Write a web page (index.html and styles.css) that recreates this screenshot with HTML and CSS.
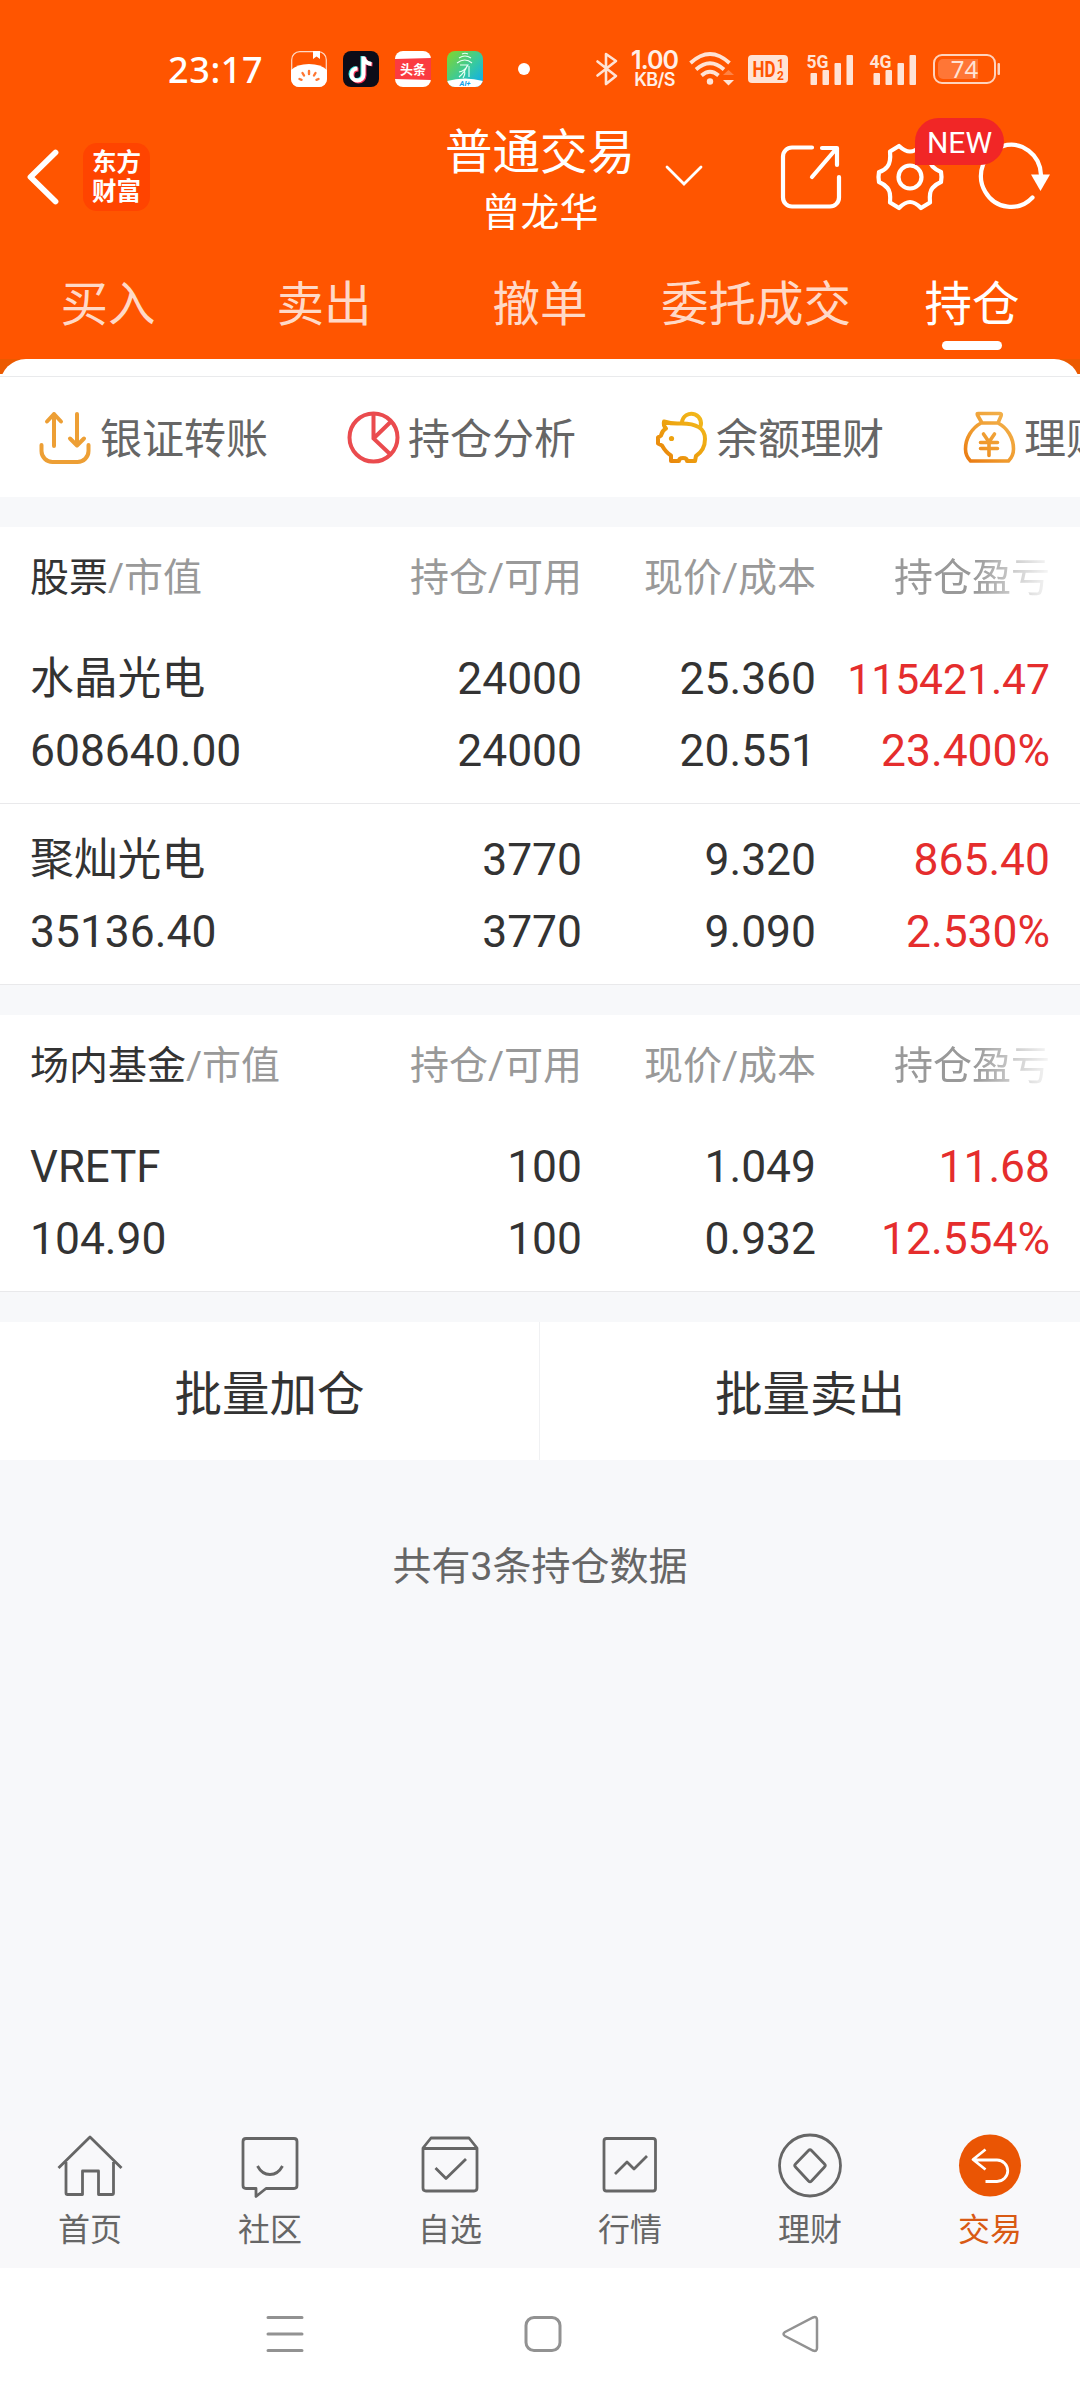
FILE: index.html
```html
<!DOCTYPE html>
<html lang="zh-CN">
<head>
<meta charset="utf-8">
<title>普通交易</title>
<link rel="stylesheet" href="styles.css">
</head>
<body>
<header class="top">
  <div class="status">
    <span class="clock">23:17</span>
    <div class="apps">
      <svg width="36" height="36" viewBox="0 0 36 36"><rect x=".7" y=".7" width="34.6" height="34.6" rx="8" fill="none" stroke="#ffd9c5" stroke-width="1.2"/><path d="M0 19Q6 13 18 13T36 19V28a8 8 0 0 1-8 8H8a8 8 0 0 1-8-8Z" fill="#fff"/><path d="M22 0h7v8l-3.500-2.500L22 8Z" fill="#fff"/><g stroke="#ff7733" stroke-width="2.400" stroke-linecap="round"><path d="M18 20v3M11.500 22l1.500 2.500M24.500 22L23 24.500M8.500 28l2 .8M27.500 28l-2 .8"/></g></svg>
      <svg width="36" height="36" viewBox="0 0 36 36"><rect width="36" height="36" rx="8" fill="#0d0c18"/><g fill="none" stroke-width="4"><path d="M19.500 5v18a6 6 0 1 1-6-6M19.500 6q1.500 6 8 6.500" stroke="#35e0e0"/><path d="M21.500 6v18.500a6 6 0 1 1-6-6M21.500 7q1.500 6 8 6.500" stroke="#fb3158"/><path d="M20.500 5.500v18a6 6 0 1 1-6-6M20.500 6.500q1.500 6 8 6.500" stroke="#fff"/></g></svg>
      <svg width="36" height="36" viewBox="0 0 36 36"><rect width="36" height="36" rx="8" fill="#fff"/><path d="M0 8l36-1v22l-36-1Z" fill="#fb3b41"/><text x="18" y="23" class="tt">头条</text></svg>
      <svg width="36" height="36" viewBox="0 0 36 36"><defs><linearGradient id="ai" x2="1" y2="1"><stop offset="0" stop-color="#84d629"/><stop offset=".55" stop-color="#36c9a0"/><stop offset="1" stop-color="#08a8fa"/></linearGradient><clipPath id="aic"><rect width="36" height="36" rx="8"/></clipPath></defs><g clip-path="url(#aic)"><rect width="36" height="36" fill="url(#ai)"/><path d="M0 30Q18 25 36 30V36H0Z" fill="#fff"/></g><g fill="none" stroke="#e8fff5" stroke-width="1.100"><path d="M15 3q3-1.500 6 0M12 7q6-4 12 0M10 12q8-6 15 0M13 14h8q-3 6-9 7M20 15q-2 6-8 11M17 19q2 3-1 8M22 15v11"/></g><text x="18" y="35" class="aitext">AI+</text></svg>
    </div>
    <i class="dot"></i>
    <svg class="bt" width="22" height="36" viewBox="0 0 22 36" fill="none" stroke="#ffe3d5" stroke-width="2.600" stroke-linejoin="round" stroke-linecap="round"><path d="M1.500 10.500L20 25 10 33V3l10 7L1.500 24.500"/></svg>
    <span class="speed"><b>1.00</b><b class="unit">KB/S</b></span>
    <svg class="wifi" width="46" height="36" viewBox="0 0 46 36"><g fill="none" stroke="#ffe3d5" stroke-width="3.800"><path d="M1.500 12Q21-6 40.500 12M7 18.500q14-12.500 28 0M12.500 24.500q8.500-7.500 17 0"/></g><circle cx="21" cy="30.500" r="3.200" fill="#ffe3d5"/><path d="M34 24h11l-5.500-5Z" fill="#ff8345"/><path d="M34 29h11l-5.500 5.500Z" fill="#ffe3d5"/></svg>
    <svg class="hd" width="40" height="28" viewBox="0 0 40 28"><rect width="40" height="28" rx="4" fill="#ffe3d5"/><text x="4.500" y="22" class="hdt" textLength="23" lengthAdjust="spacingAndGlyphs">HD</text><text x="29" y="13" class="hds">1</text><text x="29" y="25" class="hds">2</text></svg>
    <svg class="sig" width="47" height="34" viewBox="0 0 47 34" fill="#ffe3d5"><text x="-.5" y="15.500" class="gen" textLength="22" lengthAdjust="spacingAndGlyphs">5G</text><rect x="3.500" y="21" width="6.500" height="12" rx="1"/><rect x="15.500" y="18" width="6.500" height="15" rx="1"/><rect x="27.500" y="11" width="6.500" height="22" rx="1"/><rect x="39.500" y="3" width="6.500" height="30" rx="1"/></svg>
    <svg class="sig" width="47" height="34" viewBox="0 0 47 34" fill="#ffe3d5"><text x="-.5" y="15.500" class="gen" textLength="22" lengthAdjust="spacingAndGlyphs">4G</text><rect x="3.500" y="21" width="6.500" height="12" rx="1"/><rect x="15.500" y="18" width="6.500" height="15" rx="1"/><rect x="27.500" y="11" width="6.500" height="22" rx="1"/><rect x="39.500" y="3" width="6.500" height="30" rx="1"/></svg>
    <svg class="bat" width="68" height="30" viewBox="0 0 68 30"><rect x="1" y="1" width="61" height="28" rx="8" fill="none" stroke="#ffd3bd" stroke-width="2"/><path d="M10 5h35v20H10a5 5 0 0 1-5-5V10a5 5 0 0 1 5-5Z" fill="#ff7636"/><rect x="64.500" y="9" width="2.500" height="12" rx="1" fill="#ffd3bd"/><text x="31.500" y="24" class="batt">74</text></svg>
  </div>
  <div class="bar">
    <div class="brand">
      <svg width="32" height="56" viewBox="0 0 32 56" fill="none" stroke="#fff" stroke-width="5.800" stroke-linecap="round" stroke-linejoin="round"><path d="M28.500 3.500L3.500 28l25 24.500"/></svg>
      <div class="logo">东方<br>财富</div>
    </div>
    <div class="title"><div class="t1">普通交易</div><div class="t2">曾龙华</div></div>
    <svg class="down" width="38" height="22" viewBox="0 0 38 22" fill="none" stroke="#fff" stroke-width="2.800" stroke-linecap="round"><path d="M2 2l17 17L36 2"/></svg>
    <div class="actions">
      <svg width="62" height="66" viewBox="0 0 62 66" fill="none" stroke="#fff" stroke-width="4.200" stroke-linecap="round" stroke-linejoin="round"><path d="M32 3.500H12a9 9 0 0 0-9 9v41a9 9 0 0 0 9 9h38a9 9 0 0 0 9-9V33"/><path d="M42 4h15v17M56 5L32 33"/></svg>
      <svg width="68" height="68" viewBox="0 0 68 68" fill="none" stroke="#fff" stroke-width="4.200" stroke-linejoin="round"><path d="M23 3L14 8.500Q15 19 11.500 23.500T3 29Q2 34 3 39 8 41 11.500 45T14 59.500L23 65Q29 59 34 59T45 65L54 59.500Q53 49 56.500 45T65 39Q66 34 65 29 60 27 56.500 23.500T54 8.500L45 3Q39 8.500 34 8.500T23 3Z"/><circle cx="34" cy="34" r="11.500"/></svg>
      <svg width="74" height="68" viewBox="0 0 74 68"><path d="M54.500 54.500A30 31 0 1 1 63 32" fill="none" stroke="#fff" stroke-width="4.200" stroke-linecap="round"/><path d="M53 31.500h19L62.500 48Z" fill="#fff"/></svg>
      <span class="badge">NEW</span>
    </div>
  </div>
  <nav class="tabs"><span>买入</span><span>卖出</span><span>撤单</span><span>委托成交</span><span class="on">持仓</span></nav>
</header>
<div class="sheetwrap"><section class="sheet">
  <div class="tools">
    <div class="tool"><svg width="54" height="54" viewBox="0 0 54 54" fill="none" stroke="#ed9f35" stroke-width="4" stroke-linecap="round" stroke-linejoin="round"><path d="M3.500 34v6a11 11 0 0 0 11 11h25a11 11 0 0 0 11-11v-6M16 35V3M9 10.500L16 3l7 7.500M39 3v31M32 27.500l7 7 7-7"/></svg><span>银证转账</span></div>
    <div class="tool"><svg width="54" height="54" viewBox="0 0 54 54" fill="none" stroke="#ea4b4e" stroke-width="4"><circle cx="27.500" cy="26.500" r="24"/><path d="M27.500 3v24.500l17 16M27.500 27.500L44.500 11"/></svg><span>持仓分析</span></div>
    <div class="tool"><svg width="54" height="54" viewBox="0 0 54 54" fill="none" stroke="url(#pg)" stroke-width="4" stroke-linejoin="round"><defs><linearGradient id="pg" gradientUnits="userSpaceOnUse" x1="5" y1="50" x2="48" y2="5"><stop stop-color="#e9800c"/><stop offset=".5" stop-color="#eda20f"/><stop offset="1" stop-color="#f2b81c"/></linearGradient></defs><path d="M26 12.500Q18 13 10 10.500q-1 4 2 7-4 2-5 7l-3 2v6l4 2q4 7 9 10v5.500h8q0-3 4-3t4 3h8l1-5q9-6 9-17Q51 12 26 12.500Z"/><path d="M28 11.500A9.500 9.500 0 1 1 45 18"/><circle cx="17.500" cy="27.500" r="2.600" fill="#eda20f" stroke="none"/></svg><span>余额理财</span></div>
    <div class="tool"><svg width="54" height="54" viewBox="0 0 54 54" fill="none" stroke="url(#bg)" stroke-width="3.600" stroke-linejoin="round" stroke-linecap="round"><defs><linearGradient id="bg" gradientUnits="userSpaceOnUse" x1="5" y1="52" x2="45" y2="5"><stop stop-color="#e97810"/><stop offset=".4" stop-color="#ef982b"/><stop offset="1" stop-color="#f2b04a"/></linearGradient></defs><path d="M16 2.500h22q2 0 1 2.500L36 12H20l-4-7Q14.500 2.500 16 2.500ZM19 12C10 17 3.500 27 3.500 38q0 7 5 12h38q5-5 5-12c0-11-6-21-15.500-26M21.500 23L27 31l5.500-8M18.500 31.500h17M18.500 37.500h17M27 31.500v13"/></svg><span>理财</span></div>
  </div>
</section></div>

<section class="group">
  <div class="row head"><span><b>股票</b>/市值</span><span>持仓/可用</span><span>现价/成本</span><span class="fade">持仓盈亏</span></div>
  <div class="row item"><span><em class="name">水晶光电</em><br>608640.00</span><span>24000<br>24000</span><span>25.360<br>20.551</span><span class="up"><em class="long">115421.47</em><br>23.400%</span></div>
  <div class="row item"><span><em class="name">聚灿光电</em><br>35136.40</span><span>3770<br>3770</span><span>9.320<br>9.090</span><span class="up">865.40<br>2.530%</span></div>
</section>
<section class="group">
  <div class="row head"><span><b>场内基金</b>/市值</span><span>持仓/可用</span><span>现价/成本</span><span class="fade">持仓盈亏</span></div>
  <div class="row item"><span><em class="name">VRETF</em><br>104.90</span><span>100<br>100</span><span>1.049<br>0.932</span><span class="up">11.68<br>12.554%</span></div>
</section>
<div class="batch"><button>批量加仓</button><button>批量卖出</button></div>
<p class="count">共有3条持仓数据</p>

<nav class="dock">
  <div><svg width="68" height="68" viewBox="0 0 68 68"><path d="M2.500 37L34 6l31.500 31M10 31v31q0 1.500 1.500 1.500H26.500V40h16v23.500H56q1.500 0 1.500-1.500V31"/></svg>首页</div>
  <div><svg width="68" height="68" viewBox="0 0 68 68"><path d="M10 7.500H58q3 0 3 3v44q0 3-3 3H30l-10 8v-8H10q-3 0-3-3v-44q0-3 3-3ZM21.500 35q4.500 8.500 12.500 8.500T46.500 35"/></svg>社区</div>
  <div><svg width="68" height="68" viewBox="0 0 68 68"><path d="M7 17L15 7h38l8 10v40q0 3-3 3H10q-3 0-3-3ZM7 17.500h54M19.500 37L30 47.500 50 28"/></svg>自选</div>
  <div><svg width="68" height="68" viewBox="0 0 68 68"><rect x="8" y="7.500" width="51.500" height="52.500" rx="2.500"/><path d="M19 43L31 31l7 7L51 25"/></svg>行情</div>
  <div><svg width="68" height="68" viewBox="0 0 68 68"><circle cx="34" cy="34.500" r="30.500"/><path d="M32.500 19.500q1.500-1.500 3 0l13 13.500q1.500 1.500 0 3l-13 14q-1.500 1.500-3 0l-13-14q-1.500-1.500 0-3Z"/></svg>理财</div>
  <div class="active"><svg width="68" height="68" viewBox="0 0 68 68"><circle cx="34" cy="34.500" r="31" fill="#ea5504" stroke="none"/><path d="M29.500 18.500L17 28.500l12.500 10M17.500 29H41a10.700 10.700 0 0 1 0 21.500H29.500" stroke="#fff"/></svg>交易</div>
</nav>
<div class="sysnav">
  <svg width="38" height="40" viewBox="0 0 38 40" stroke-linecap="round"><path d="M2 3.500h34M2 20h34M2 36.500h34"/></svg>
  <svg width="38" height="40" viewBox="0 0 38 40"><rect x="2" y="3.500" width="34" height="33" rx="8"/></svg>
  <svg width="38" height="40" viewBox="0 0 38 40"><path d="M3 18L31 3.500q4-1.500 4 2.500v28q0 4-4 2.500L3 22q-3-2 0-4Z" stroke-width="2.500"/></svg>
</div>
</body>
</html>
```

FILE: styles.css
```css
* { box-sizing: border-box; }
body {
  margin: 0;
  width: 1080px;
  height: 2400px;
  overflow: hidden;
  display: flex;
  flex-direction: column;
  background: #f7f8fa;
  color: #333;
  font-family: Roboto, "Noto Sans CJK SC", sans-serif;
}
svg { display: block; flex: none; overflow: visible; }
.top { height: 359px; background: #ff5500; color: #fff; }

/* status bar */
.status { height: 110px; padding: 28px 0 0 168px; display: flex; align-items: center; }
.clock { width: 123px; padding-top: 2px; font: 500 36px/80px "Noto Sans", sans-serif; letter-spacing: .6px; }
.apps { display: flex; gap: 16px; }
.dot { width: 12px; height: 12px; margin: 0 66px 0 35px; border-radius: 50%; background: #fff; }
.speed { width: 51px; margin-left: 11px; display: flex; flex-direction: column; align-items: center; color: #ffefe7; }
.speed b { font: 600 25px/21px Inter, sans-serif; letter-spacing: -1px; }
.speed .unit { font-size: 18px; line-height: 17px; letter-spacing: -.6px; }
.wifi { margin-left: 9px; }
.hd { margin: 0 19px 0 13px; }
.sig { margin-right: 16px; }
.tt { font: 700 13px "Noto Sans CJK SC", sans-serif; fill: #fff; text-anchor: middle; }
.aitext { font: italic 700 7.500px Roboto, sans-serif; fill: #12a0e8; text-anchor: middle; }
.hdt { font: 700 22px Roboto, sans-serif; fill: #ff5500; }
.hds { font: 700 12px Roboto, sans-serif; fill: #ff5500; }
.gen { font: 700 19px Roboto, sans-serif; }
.batt { font: 400 24px "Noto Sans", sans-serif; fill: #ffe3d5; text-anchor: middle; }

/* title bar */
.bar { height: 140px; display: grid; grid-template-columns: 445px 190px 145px 1fr; align-items: start; }
.brand { display: flex; align-items: center; gap: 24px; padding: 33px 0 0 27px; }
.logo { width: 67px; height: 68px; border-radius: 14px; background: #ff4400; padding-top: 3px; text-align: center; font: 700 24.500px/29px "Noto Sans CJK SC", sans-serif; }
.title { text-align: center; padding-top: 15px; }
.t1 { font-size: 47.500px; line-height: 57px; white-space: nowrap; }
.t2 { font-size: 39px; line-height: 62px; }
.down { margin: 55px 0 0 30px; }
.actions { position: relative; display: flex; align-items: center; gap: 34px; padding-top: 33px; }
.actions svg + svg + svg { margin-left: 0; }
.badge { position: absolute; left: 135px; top: 8px; width: 89px; height: 47px; border-radius: 24px 24px 24px 0; background: #f12626; text-align: center; font: 400 30px/49px Roboto, sans-serif; }

.tabs { display: grid; grid-template-columns: repeat(5, 1fr); text-align: center; font-size: 47.500px; line-height: 70px; padding-top: 20px; color: #ffd9c7; }
.tabs .on { color: #fff; display: flex; flex-direction: column; align-items: center; }
.tabs .on::after { content: ""; width: 60px; height: 9px; border-radius: 5px; margin-top: 1px; background: #fff; }

/* shortcuts */
.sheetwrap { background: linear-gradient(#ec5a00 15px, #fff 15px); height: 138px; overflow: hidden; }
.sheet { height: 138px; border-radius: 26px 26px 0 0; background: #fff; padding-top: 17px; }
.tools { border-top: 1px solid #e9eaec; display: flex; padding: 34px 0 0 38px; height: 121px; }
.tool { width: 308px; flex: none; display: flex; align-items: flex-start; gap: 8px; height: 54px; font-size: 42px; line-height: 57px; color: #666; white-space: nowrap; }

/* holdings */
.group { margin-top: 30px; background: #fff; border-bottom: 1px solid #e9e9eb; }
.row { display: grid; grid-template-columns: 1fr 234px 234px 234px; padding: 0 30px; text-align: right; }
.row span:first-child { text-align: left; }
.row.item { height: 181px; padding-top: 21px; font-size: 44.400px; line-height: 72px; }
.row.item + .row.item { border-top: 1px solid #e9e9eb; padding-top: 20px; }
.row.head { height: 95px; padding-top: 5px; line-height: 92px; font-size: 39px; color: #999; white-space: nowrap; }
.head b { font-weight: 400; color: #333; }
.fade { -webkit-mask-image: linear-gradient(90deg, #000 68%, rgba(0,0,0,.45) 86%, rgba(0,0,0,.08) 100%); mask-image: linear-gradient(90deg, #000 68%, rgba(0,0,0,.45) 86%, rgba(0,0,0,.08) 100%); }
.item em { font-style: normal; }
.name { font-size: 43.800px; }
.up { color: #e52d2d; }
.long { font-size: 42.600px; }

.batch { margin-top: 30px; height: 138px; display: grid; grid-template-columns: 539px 1fr; background: #fff; }
.batch button { border: 0; background: none; padding: 0 0 1px; color: #333; font: 400 47.500px Roboto, "Noto Sans CJK SC", sans-serif; }
.batch button + button { border-left: 1px solid #f0f1f3; }
.count { margin: 78px 0 0; text-align: center; font-size: 39px; line-height: 58px; color: #666; }

/* bottom navigation */
.dock { margin-top: auto; height: 137px; display: grid; grid-template-columns: repeat(6, 1fr); font-size: 32px; line-height: 46px; color: #666; background: #f8f8fa; }
.dock div { display: flex; flex-direction: column; align-items: center; gap: 8px; }
.dock svg { fill: none; stroke: #666; stroke-width: 2.800; stroke-linejoin: round; }
.dock .active { color: #d95a14; }
.sysnav { height: 132px; background: #fff; display: flex; justify-content: center; gap: 220px; padding: 46px 0 0 6px; }
.sysnav svg { fill: none; stroke: #929292; stroke-width: 3; }
```
